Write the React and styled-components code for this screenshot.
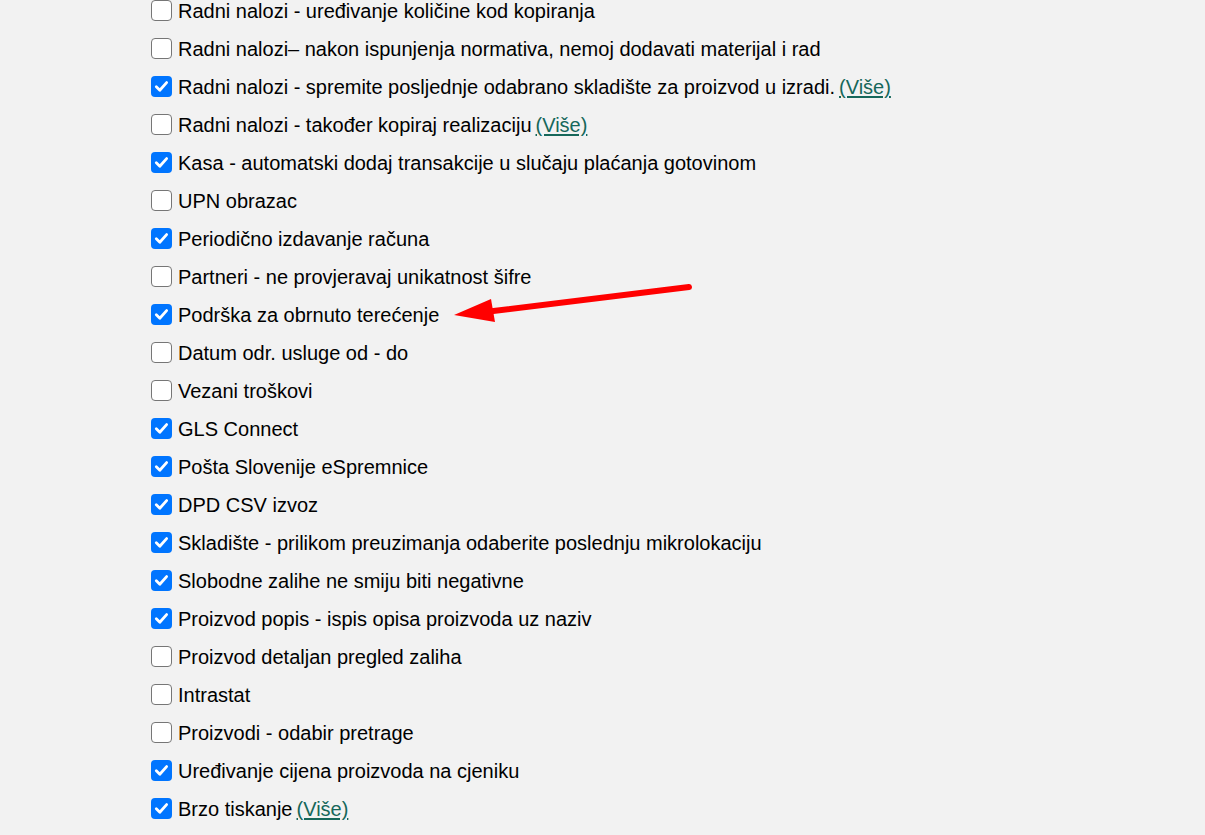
import React from "react";
import styled, { createGlobalStyle } from "styled-components";

const Global = createGlobalStyle`
  html, body { margin: 0; padding: 0; background: #f2f2f2; }
  body { font-family: "Liberation Sans", Arial, sans-serif; overflow: hidden; }
`;

const Page = styled.div`
  position: relative;
  width: 1205px;
  height: 835px;
  background: #f2f2f2;
  overflow: hidden;
`;

const List = styled.ul`
  list-style: none;
  margin: 0;
  padding: 0 0 0 151px;
  display: flex;
  flex-direction: column;
  gap: 17px;
`;

const Row = styled.li`
  display: flex;
  align-items: center;
  height: 21px;
  font-size: 20px;
  color: #000;
  white-space: nowrap;
`;

const Label = styled.span`
  display: flex;
  align-items: baseline;
  margin-top: 2px;
`;

const Box = styled.span`
  box-sizing: border-box;
  width: 21px;
  height: 21px;
  flex: none;
  border-radius: 4px;
  margin-right: 6px;
  display: flex;
  align-items: center;
  justify-content: center;
  background: ${(p) => (p.$on ? "#0075ff" : "#fff")};
  border: ${(p) => (p.$on ? "none" : "1.5px solid #767676")};
`;

const More = styled.a`
  margin-left: 4px;
  color: #16675a;
  text-decoration: underline;
  text-underline-offset: 2px;
`;

const Arrow = styled.svg`
  position: absolute;
  left: 0;
  top: 0;
  pointer-events: none;
`;

const items = [
  ["Radni nalozi - uređivanje količine kod kopiranja", false],
  ["Radni nalozi– nakon ispunjenja normativa, nemoj dodavati materijal i rad", false],
  ["Radni nalozi - spremite posljednje odabrano skladište za proizvod u izradi.", true, true],
  ["Radni nalozi - također kopiraj realizaciju", false, true],
  ["Kasa - automatski dodaj transakcije u slučaju plaćanja gotovinom", true],
  ["UPN obrazac", false],
  ["Periodično izdavanje računa", true],
  ["Partneri - ne provjeravaj unikatnost šifre", false],
  ["Podrška za obrnuto terećenje", true],
  ["Datum odr. usluge od - do", false],
  ["Vezani troškovi", false],
  ["GLS Connect", true],
  ["Pošta Slovenije eSpremnice", true],
  ["DPD CSV izvoz", true],
  ["Skladište - prilikom preuzimanja odaberite poslednju mikrolokaciju", true],
  ["Slobodne zalihe ne smiju biti negativne", true],
  ["Proizvod popis - ispis opisa proizvoda uz naziv", true],
  ["Proizvod detaljan pregled zaliha", false],
  ["Intrastat", false],
  ["Proizvodi - odabir pretrage", false],
  ["Uređivanje cijena proizvoda na cjeniku", true],
  ["Brzo tiskanje", true, true],
];

function Check({ on }) {
  return (
    <Box $on={on}>
      {on && (
        <svg width="15" height="15" viewBox="0 0 15 15">
          <path d="M2.3 7.8 L5.8 11.2 L12.6 3.6" fill="none" stroke="#fff" strokeWidth="2.8" strokeLinecap="round" strokeLinejoin="round" />
        </svg>
      )}
    </Box>
  );
}

export default function App() {
  return (
    <Page>
      <Global />
      <List>
        {items.map(([label, on, more], i) => (
          <Row key={i}>
            <Check on={on} />
            <Label>
              <span>{label}</span>
              {more && <More href="#">(Više)</More>}
            </Label>
          </Row>
        ))}
      </List>
      <Arrow width="1205" height="835" viewBox="0 0 1205 835">
        <line x1="689" y1="287" x2="485" y2="312" stroke="#ff0000" strokeWidth="6" strokeLinecap="round" />
        <polygon points="454,315 491,299 495,322" fill="#ff0000" />
      </Arrow>
    </Page>
  );
}
